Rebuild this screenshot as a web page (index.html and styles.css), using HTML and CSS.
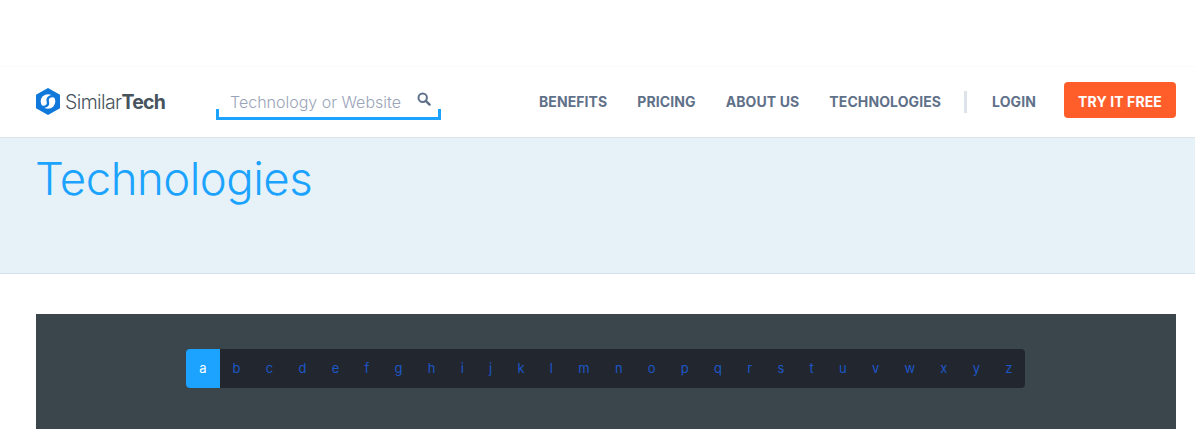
FILE: index.html
```html
<!DOCTYPE html>
<html lang="en">
<head>
<meta charset="utf-8">
<title>Technologies - SimilarTech</title>
<link rel="stylesheet" href="styles.css">
</head>
<body>
<div class="topbar"></div>
<header class="header">
  <a class="logo" href="#">
    <svg class="logo-icon" width="24" height="27" viewBox="0 0 24 27" aria-hidden="true">
      <path d="M12 0 L24 6.7 V20.3 L12 27 L0 20.3 V6.7 Z" fill="#0f78da"/>
      <circle cx="12" cy="13.5" r="7.3" fill="#fff"/>
      <path d="M18 8.4 C14.5 7.6 10.6 9.4 11.8 13.5 C13 17.6 9.5 19.4 6 18.6" fill="none" stroke="#0f78da" stroke-width="2.3"/>
    </svg>
    <span class="logo-text">Similar<b>Tech</b></span>
  </a>
  <form class="search">
    <span class="search-text">Technology or Website</span>
    <svg class="search-icon" width="14" height="14" viewBox="0 0 14 14" aria-hidden="true">
      <circle cx="5.7" cy="5.7" r="4.2" fill="none" stroke="#5f7189" stroke-width="2"/>
      <path d="M8.8 8.8 L12.6 12.6" stroke="#5f7189" stroke-width="2.4" stroke-linecap="round"/>
    </svg>
  </form>
  <nav class="nav">
    <a href="#">BENEFITS</a>
    <a href="#">PRICING</a>
    <a href="#">ABOUT US</a>
    <a href="#">TECHNOLOGIES</a>
    <span class="divider"></span>
    <a href="#">LOGIN</a>
    <a class="cta" href="#">TRY IT FREE</a>
  </nav>
</header>
<section class="hero">
  <h1>Technologies</h1>
</section>
<section class="panel">
  <ul class="letters">
    <li class="active"><a href="#">a</a></li><li><a href="#">b</a></li><li><a href="#">c</a></li><li><a href="#">d</a></li><li><a href="#">e</a></li><li><a href="#">f</a></li><li><a href="#">g</a></li><li><a href="#">h</a></li><li><a href="#">i</a></li><li><a href="#">j</a></li><li><a href="#">k</a></li><li><a href="#">l</a></li><li><a href="#">m</a></li><li><a href="#">n</a></li><li><a href="#">o</a></li><li><a href="#">p</a></li><li><a href="#">q</a></li><li><a href="#">r</a></li><li><a href="#">s</a></li><li><a href="#">t</a></li><li><a href="#">u</a></li><li><a href="#">v</a></li><li><a href="#">w</a></li><li><a href="#">x</a></li><li><a href="#">y</a></li><li><a href="#">z</a></li>
  </ul>
</section>
</body>
</html>
```
FILE: styles.css
```css
* { box-sizing: border-box; }
html, body { margin: 0; padding: 0; background: #fff; overflow: hidden; }
body { font-family: "Inter", "Liberation Sans", sans-serif; height: 435px; }
a { text-decoration: none; color: inherit; }

.topbar { height: 67px; background: #fff; border-bottom: 1px solid #fafafa; }

.header {
  height: 71px;
  display: flex;
  align-items: center;
  padding: 0 19px 0 36px;
  border-bottom: 1px solid #dde5ea;
}
.logo { display: flex; align-items: center; gap: 5px; width: 180px; margin-top: -1px; }
.logo-icon { display: block; }
.logo-text { font-size: 19.5px; letter-spacing: -0.6px; color: #47535d; font-weight: 300; }
.logo-text b { font-weight: 700; letter-spacing: -0.8px; }

.search {
  width: 225px;
  height: 30px;
  margin-top: 5px;
  display: flex;
  align-items: center;
  justify-content: space-between;
  padding: 0 10px 0 14px;
  background:
    linear-gradient(#1ba3ff, #1ba3ff) left bottom / 100% 3px no-repeat,
    linear-gradient(#1ba3ff, #1ba3ff) left bottom / 3px 11px no-repeat,
    linear-gradient(#1ba3ff, #1ba3ff) right bottom / 3px 11px no-repeat;
}
.search-text { font-size: 16px; font-weight: 300; color: #9aa4b8; position: relative; top: -3px; }
.search-icon { margin-top: -11px; }

.nav { margin-left: auto; display: flex; align-items: center; font-size: 14px; font-weight: 700; letter-spacing: 0.1px; color: #5f7189; margin-top: -5px; }
.nav > a { margin-left: 30px; padding-top: 4px; }
.divider { width: 3px; height: 22px; background: #dde3e8; margin-left: 23px; margin-right: -5px; margin-top: 4px; }
.nav > a.cta {
  margin-left: 28px;
  width: 112px;
  height: 36px;
  display: flex;
  align-items: center;
  justify-content: center;
  background: #ff5e2b;
  color: #fff;
  border-radius: 4px;
  font-size: 14px;
}

.hero { height: 136px; background: #e6f2f8; border-bottom: 1px solid #d3e1ea; padding: 11px 35px 0; }
.hero h1 { margin: 0; font-size: 45.5px; line-height: 60px; font-weight: 300; letter-spacing: -0.5px; color: #1ba3ff; }

.panel { margin: 40px 19px 0 36px; height: 115px; background: #3b464c; display: flex; justify-content: center; padding-top: 35px; }
.letters {
  list-style: none;
  margin: 0 0 0 -1px;
  padding: 0;
  width: 839px;
  height: 39px;
  display: flex;
  background: #22272f;
  border-radius: 4px;
  overflow: hidden;
  font-size: 13px;
  font-weight: 400;
  line-height: 39px;
  color: #1d56c8;
}
.letters li { flex: auto; text-align: center; }
.letters a { display: block; }
.letters .active { background: #1ba3ff; color: #fff; flex: 0 0 34px; }
```
